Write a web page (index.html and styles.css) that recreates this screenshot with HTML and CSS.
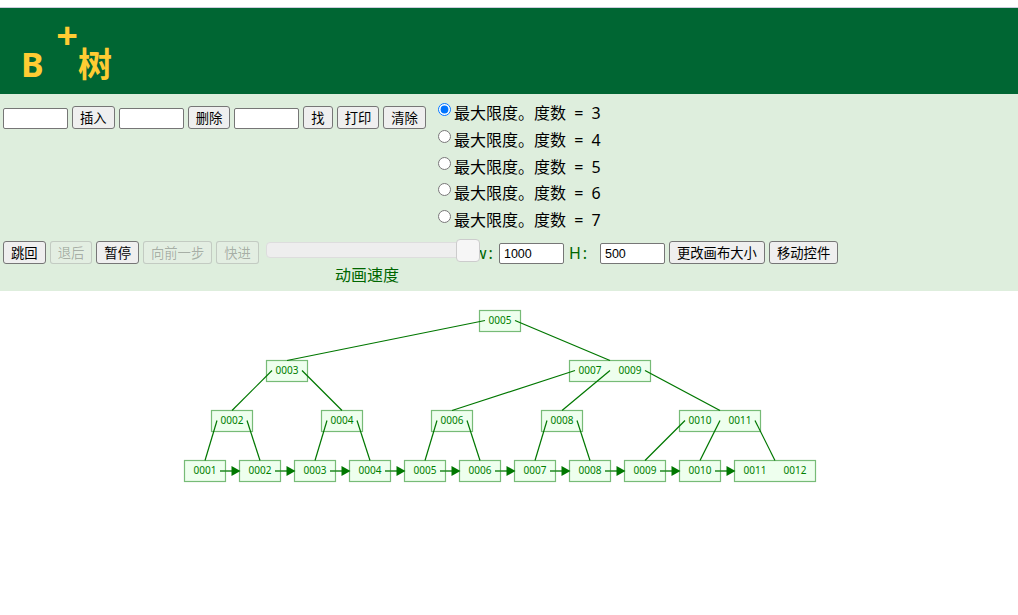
FILE: index.html
```html
<!DOCTYPE html>
<html lang="zh">
<head>
    <meta charset="UTF-8">
    <title>B+ 树</title>
    <link rel="stylesheet" href="styles.css">
</head>
<body>

    <div class="header">
        <h1><span class="b">B</span><span class="plus">+</span><span class="shu">树</span></h1>
    </div>

    <div class="controls">
        <div class="row-top">
            <div class="tools">
                <input type="text">
                <button>插入</button>
                <input type="text">
                <button>删除</button>
                <input type="text">
                <button>找</button>
                <button>打印</button>
                <button>清除</button>
            </div>
            <div class="degrees">
                <label><input type="radio" name="degree" checked>最大限度。度数 = 3</label>
                <label><input type="radio" name="degree">最大限度。度数 = 4</label>
                <label><input type="radio" name="degree">最大限度。度数 = 5</label>
                <label><input type="radio" name="degree">最大限度。度数 = 6</label>
                <label><input type="radio" name="degree">最大限度。度数 = 7</label>
            </div>
        </div>
        <div class="row-bottom">
            <button>跳回</button>
            <button disabled>退后</button>
            <button>暂停</button>
            <button disabled>向前一步</button>
            <button disabled>快进</button>
            <div class="speed">
                <div class="track"><span class="thumb"></span></div>
                <div class="speed-label">动画速度</div>
            </div>
            <span class="size-w">w:</span>
            <input type="text" value="1000">
            <span class="size-h">H:</span>
            <input type="text" value="500">
            <button>更改画布大小</button>
            <button>移动控件</button>
        </div>
    </div>

    <svg class="tree" width="1018" height="324" viewBox="0 291 1018 324">
        <defs>
            <polygon id="head" points="0,-5 9,0 0,5"/>
        </defs>

        <!-- nodes -->
        <g class="nodes">
            <rect x="479.5" y="310.5" width="41" height="21"/>
            <rect x="266.5" y="360.5" width="41" height="21"/>
            <rect x="569.5" y="360.5" width="81" height="21"/>
            <rect x="211.5" y="410.5" width="41" height="21"/>
            <rect x="321.5" y="410.5" width="41" height="21"/>
            <rect x="431.5" y="410.5" width="41" height="21"/>
            <rect x="541.5" y="410.5" width="41" height="21"/>
            <rect x="679.5" y="410.5" width="81" height="21"/>
            <rect x="184.5" y="460.5" width="41" height="21"/>
            <rect x="239.5" y="460.5" width="41" height="21"/>
            <rect x="294.5" y="460.5" width="41" height="21"/>
            <rect x="349.5" y="460.5" width="41" height="21"/>
            <rect x="404.5" y="460.5" width="41" height="21"/>
            <rect x="459.5" y="460.5" width="41" height="21"/>
            <rect x="514.5" y="460.5" width="41" height="21"/>
            <rect x="569.5" y="460.5" width="41" height="21"/>
            <rect x="624.5" y="460.5" width="41" height="21"/>
            <rect x="679.5" y="460.5" width="41" height="21"/>
            <rect x="734.5" y="460.5" width="81" height="21"/>
        </g>

        <!-- tree edges -->
        <g class="edges">
            <line x1="485" y1="320.5" x2="287" y2="360.5"/>
            <line x1="515" y1="320.5" x2="610" y2="360.5"/>
            <line x1="272" y1="370.5" x2="232" y2="410.5"/>
            <line x1="302" y1="370.5" x2="342" y2="410.5"/>
            <line x1="575" y1="370.5" x2="452" y2="410.5"/>
            <line x1="610" y1="370.5" x2="562" y2="410.5"/>
            <line x1="645" y1="370.5" x2="720" y2="410.5"/>
            <line x1="217" y1="420.5" x2="205" y2="460.5"/>
            <line x1="247" y1="420.5" x2="260" y2="460.5"/>
            <line x1="327" y1="420.5" x2="315" y2="460.5"/>
            <line x1="357" y1="420.5" x2="370" y2="460.5"/>
            <line x1="437" y1="420.5" x2="425" y2="460.5"/>
            <line x1="467" y1="420.5" x2="480" y2="460.5"/>
            <line x1="547" y1="420.5" x2="535" y2="460.5"/>
            <line x1="577" y1="420.5" x2="590" y2="460.5"/>
            <line x1="685" y1="420.5" x2="645" y2="460.5"/>
            <line x1="720" y1="420.5" x2="700" y2="460.5"/>
            <line x1="755" y1="420.5" x2="775" y2="460.5"/>
        </g>

        <!-- leaf links -->
        <g class="links">
            <line x1="220" y1="471" x2="232" y2="471"/><use href="#head" x="231.5" y="471"/>
            <line x1="275" y1="471" x2="287" y2="471"/><use href="#head" x="286.5" y="471"/>
            <line x1="330" y1="471" x2="342" y2="471"/><use href="#head" x="341.5" y="471"/>
            <line x1="385" y1="471" x2="397" y2="471"/><use href="#head" x="396.5" y="471"/>
            <line x1="440" y1="471" x2="452" y2="471"/><use href="#head" x="451.5" y="471"/>
            <line x1="495" y1="471" x2="507" y2="471"/><use href="#head" x="506.5" y="471"/>
            <line x1="550" y1="471" x2="562" y2="471"/><use href="#head" x="561.5" y="471"/>
            <line x1="605" y1="471" x2="617" y2="471"/><use href="#head" x="616.5" y="471"/>
            <line x1="660" y1="471" x2="672" y2="471"/><use href="#head" x="671.5" y="471"/>
            <line x1="715" y1="471" x2="727" y2="471"/><use href="#head" x="726.5" y="471"/>
        </g>

        <!-- keys -->
        <g class="keys">
            <text x="500" y="324">0005</text>
            <text x="287" y="374">0003</text>
            <text x="590" y="374">0007</text>
            <text x="630" y="374">0009</text>
            <text x="232" y="424">0002</text>
            <text x="342" y="424">0004</text>
            <text x="452" y="424">0006</text>
            <text x="562" y="424">0008</text>
            <text x="700" y="424">0010</text>
            <text x="740" y="424">0011</text>
            <text x="205" y="474">0001</text>
            <text x="260" y="474">0002</text>
            <text x="315" y="474">0003</text>
            <text x="370" y="474">0004</text>
            <text x="425" y="474">0005</text>
            <text x="480" y="474">0006</text>
            <text x="535" y="474">0007</text>
            <text x="590" y="474">0008</text>
            <text x="645" y="474">0009</text>
            <text x="700" y="474">0010</text>
            <text x="755" y="474">0011</text>
            <text x="795" y="474">0012</text>
        </g>
    </svg>

</body>
</html>
```

FILE: styles.css
```css
html, body { margin: 0; padding: 0; overflow: hidden; }
body { font-family: "Noto Sans", "Noto Sans CJK SC", sans-serif; font-size: 16px; background: #fff; color: #000; }

.header { margin-top: 7px; height: 87px; background-color: #006633; border-top: 1px solid #ccd; box-sizing: border-box; }
h1 { margin: 0; height: 86px; display: flex; align-items: flex-start; color: #ffcc33; font-family: "Noto Sans", "Noto Sans CJK SC", sans-serif; font-size: 34px; font-weight: 700; line-height: 46px; }
.b { margin: 33px 0 0 21px; }
.plus { margin: 3px 0 0 12.5px; font-size: 38px; }
.shu { margin: 33px 0 0 0; }

.controls { height: 197px; background-color: #deeedd; }
input[type="text"] { width: 65px; height: 21px; box-sizing: border-box; padding: 1px 4px; margin: 0; font-family: "Liberation Sans", sans-serif; font-size: 12.5px; border: 1px solid #767676; border-radius: 2px; background: #fff; }
button { height: 23px; padding: 0 7px; margin: 0; font-family: "Noto Sans CJK SC", sans-serif; font-size: 13.33px; line-height: 21px; color: #000; background: #efefef; border: 1px solid #767676; border-radius: 3px; white-space: nowrap; }
button:disabled { color: rgba(16, 16, 16, 0.3); background: rgba(239, 239, 239, 0.3); border-color: rgba(118, 118, 118, 0.3); }

.row-top { display: flex; height: 147px; }
.tools { display: flex; align-items: flex-end; gap: 4px; height: 35px; margin-left: 3px; width: 435px; }
.degrees { display: flex; flex-direction: column; padding-top: 6px; }
.degrees label { display: flex; align-items: flex-start; height: 26.75px; line-height: 26px; white-space: pre; word-spacing: 4px; }
.degrees input { width: 13px; height: 13px; margin: 3px 3px 0 0; }

.row-bottom { display: flex; align-items: flex-start; gap: 4px; margin-left: 3px; }
.row-bottom input { margin-top: 2px; }
.speed { width: 200px; margin-left: 3px; color: #006600; text-align: center; }
.track { position: relative; height: 16px; margin-top: 1px; background: #eee; border: 1px solid #ddd; border-radius: 4px; box-sizing: border-box; }
.thumb { position: absolute; top: -4px; right: -15px; width: 24px; height: 23px; box-sizing: border-box; background: #f6f6f6; border: 1px solid #ccc; border-radius: 4px; }
.speed-label { margin-top: 4px; padding-left: 2px; line-height: 24px; font-family: "Noto Sans CJK SC", sans-serif; }
.size-w, .size-h { color: #006600; line-height: 24px; letter-spacing: 2px; }
.size-w { margin-left: 4px; width: 21px; }
.size-h { margin-left: 1px; width: 27px; }

.tree { display: block; }
.nodes rect { fill: #eeffee; stroke: #77bb77; stroke-width: 1.2; }
.edges line { stroke: #007700; stroke-width: 1.2; }
.links line { stroke: #228822; stroke-width: 1.5; }
.links use { fill: #007700; }
.keys text { fill: #008000; font-family: "Noto Sans", sans-serif; font-size: 10px; text-anchor: middle; }
```
